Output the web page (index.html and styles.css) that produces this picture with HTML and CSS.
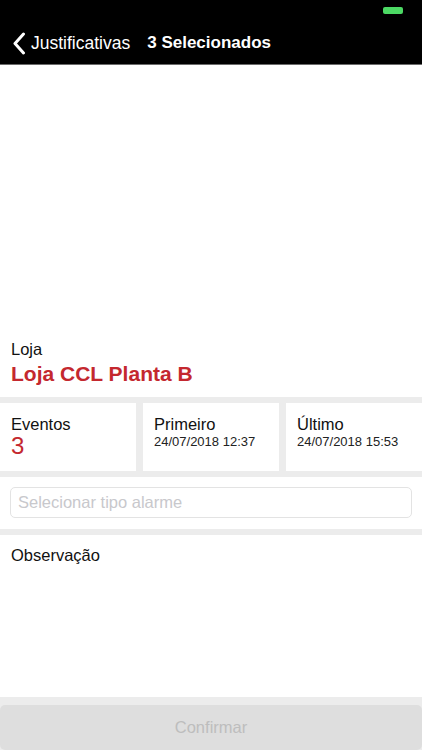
FILE: index.html
```html
<!DOCTYPE html>
<html lang="pt">
<head>
    <meta charset="UTF-8">
    <meta name="viewport" content="width=device-width, initial-scale=1.0">
    <title>Justificativas</title>
    <link rel="stylesheet" href="styles.css">
</head>
<body>
    <div class="screen">
        <header class="topbar">
            <div class="status">
                <span class="battery"></span>
            </div>
            <div class="nav">
                <a class="back" href="#">
                    <svg width="14" height="23" viewBox="0 0 14 23"><path d="M11.5 2 L3 11.5 L11.5 21" fill="none" stroke="#fff" stroke-width="3" stroke-linecap="round" stroke-linejoin="round"/></svg>
                    <span>Justificativas</span>
                </a>
                <span class="title">3 Selecionados</span>
            </div>
        </header>

        <div class="blank"></div>

        <section class="store">
            <div class="label">Loja</div>
            <div class="store-name">Loja CCL Planta B</div>
        </section>

        <section class="stats">
            <div class="card">
                <div class="label">Eventos</div>
                <div class="count">3</div>
            </div>
            <div class="card">
                <div class="label">Primeiro</div>
                <div class="date">24/07/2018 12:37</div>
            </div>
            <div class="card">
                <div class="label">Último</div>
                <div class="date">24/07/2018 15:53</div>
            </div>
        </section>

        <section class="picker">
            <input type="text" class="field" placeholder="Selecionar tipo alarme">
        </section>

        <section class="notes">
            <div class="label">Observação</div>
        </section>

        <footer class="actions">
            <button type="button" class="confirm" disabled>Confirmar</button>
        </footer>
    </div>
</body>
</html>
```

FILE: styles.css
```css
body{
    margin: 0;
    font-family: "Liberation Sans", Arial, sans-serif;
    background: #fff;
}
.screen{
    width: 422px;
    height: 750px;
    display: flex;
    flex-direction: column;
    background: #ececec;
    overflow: hidden;
}
.topbar{
    background: #000;
    height: 64px;
    border-bottom: 1px solid #6b6b6b;
    color: #fff;
}
.status{
    height: 20px;
    display: flex;
    justify-content: flex-end;
    align-items: flex-start;
    padding-right: 19px;
}
.battery{
    margin-top: 7px;
    width: 20px;
    height: 7px;
    border-radius: 2px;
    background: #4cd964;
}
.nav{
    height: 46px;
    display: flex;
    align-items: center;
    padding-left: 12px;
}
.back{
    display: flex;
    align-items: center;
    color: #fff;
    text-decoration: none;
    font-size: 17.5px;
    gap: 5px;
}
.title{
    margin-left: 17px;
    font-size: 17px;
    font-weight: bold;
}
.blank{
    background: #fff;
    height: 271px;
}
.store{
    background: #fff;
    padding: 4px 11px 11px;
}
.label{
    font-size: 16.5px;
    color: #111;
    line-height: 19px;
}
.store-name{
    margin-top: 2px;
    font-size: 21px;
    font-weight: bold;
    color: #c4282f;
    line-height: 25px;
}
.stats{
    display: grid;
    grid-template-columns: 136px 136px 137px;
    gap: 6px 7px;
    height: 68px;
    padding-top: 6px;
}
.card{
    background: #fff;
    padding: 12px 11px 0;
}
.count{
    font-size: 24px;
    color: #c4282f;
    line-height: 24px;
}
.date{
    font-size: 13px;
    color: #222;
}
.picker{
    margin-top: 6px;
    background: #fff;
    padding: 10px 10px 11px;
}
.field{
    box-sizing: border-box;
    width: 100%;
    height: 31px;
    border: 1px solid #e3e3e3;
    border-radius: 5px;
    padding: 0 7px;
    font-family: inherit;
    font-size: 16.5px;
    outline: none;
}
.field::placeholder{
    color: #c8c8cc;
}
.notes{
    margin-top: 6px;
    background: #fff;
    height: 162px;
    padding: 11px 11px 0;
    box-sizing: border-box;
}
.actions{
    flex: 1;
    display: flex;
    align-items: flex-end;
}
.confirm{
    width: 100%;
    height: 45px;
    border: none;
    border-radius: 5px;
    background: #dedede;
    color: #bdbdbd;
    font-family: inherit;
    font-size: 16.5px;
}
```
